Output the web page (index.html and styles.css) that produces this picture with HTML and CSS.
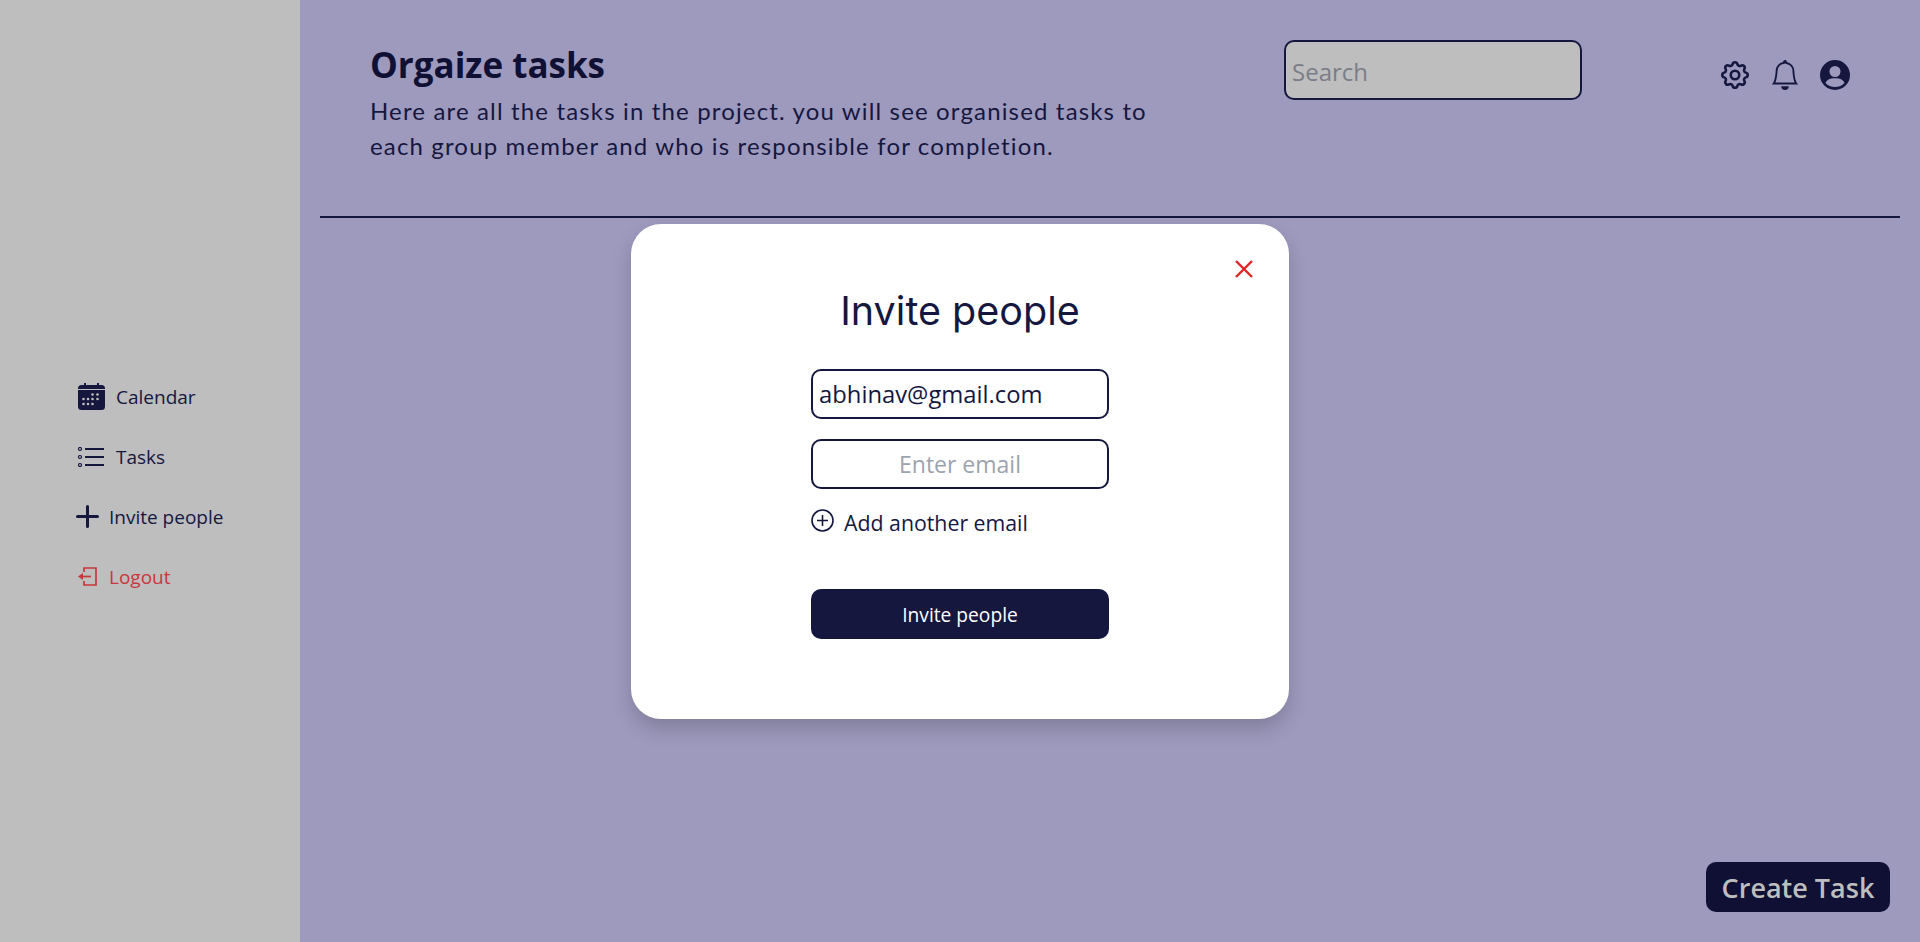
FILE: index.html
```html
<!DOCTYPE html>
<html lang="en">
<head>
  <meta charset="UTF-8" />
  <meta name="viewport" content="width=device-width, initial-scale=1.0"/>
  <title>Organize tasks</title>
  <link rel="stylesheet" href="styles.css">
</head>
<body>
  <aside class="sidebar">
    <nav class="side-nav">
      <a class="side-link">
        <svg class="icon-calendar" viewBox="0 0 27 27">
          <path class="dark-fill" d="M6 0h2v2h11V0h2v2h2.500A3.500 3.500 0 0 1 27 5.500V6H0V5.500A3.500 3.500 0 0 1 3.500 2H6z"/>
          <path class="dark-fill" d="M0 7h27V23.500A3.500 3.500 0 0 1 23.500 27h-20A3.500 3.500 0 0 1 0 23.500z"/>
          <g class="grey-fill">
            <circle cx="14.500" cy="11.500" r="1.300"/><circle cx="19.500" cy="11.500" r="1.300"/>
            <circle cx="5.500" cy="16" r="1.300"/><circle cx="10" cy="16" r="1.300"/><circle cx="14.500" cy="16" r="1.300"/><circle cx="19.500" cy="16" r="1.300"/>
            <circle cx="5.500" cy="21" r="1.300"/><circle cx="10" cy="21" r="1.300"/><circle cx="14.500" cy="21" r="1.300"/>
          </g>
        </svg>
        <span>Calendar</span>
      </a>
      <a class="side-link">
        <svg class="icon-tasks" viewBox="0 0 26 20" fill="none" stroke="#15173f">
          <circle cx="2" cy="2" r="1.500" stroke-width="1.200"/>
          <circle cx="2" cy="10" r="1.500" stroke-width="1.200"/>
          <circle cx="2" cy="18" r="1.500" stroke-width="1.200"/>
          <path d="M7 2h19M7 10h19M7 18h19" stroke-width="1.800"/>
        </svg>
        <span>Tasks</span>
      </a>
      <a class="side-link side-link-tight">
        <svg class="icon-plus" viewBox="0 0 23 23" fill="none" stroke="#15173f" stroke-width="3" stroke-linecap="round">
          <path d="M11.500 1.500v20M1.500 11.500h20"/>
        </svg>
        <span>Invite people</span>
      </a>
      <a class="side-link side-link-tight logout">
        <svg class="icon-logout" viewBox="0 0 19 19" fill="none" stroke="#c8383a" stroke-width="1.700">
          <path d="M6 5V1h12v17H6v-4"/>
          <path d="M13 9.500H3"/>
          <path class="red-fill" stroke="none" d="M0 9.500L5 6v7z"/>
        </svg>
        <span>Logout</span>
      </a>
    </nav>
  </aside>

  <main class="content">
    <header class="top">
      <div class="intro">
        <h1>Orgaize tasks</h1>
        <p>Here are all the tasks in the project. you will see organised tasks to each group member and who is responsible for completion.</p>
      </div>
      <input class="search" type="text" placeholder="Search" />
      <div class="top-icons">
        <svg class="icon-gear" viewBox="0 0 24 24" fill="none" stroke="#15173f" stroke-width="1.800">
          <path d="M10.325 4.317c.426-1.756 2.924-1.756 3.35 0a1.724 1.724 0 002.573 1.066c1.543-.94 3.31.826 2.37 2.37a1.724 1.724 0 001.065 2.572c1.756.426 1.756 2.924 0 3.35a1.724 1.724 0 00-1.066 2.573c.94 1.543-.826 3.31-2.37 2.37a1.724 1.724 0 00-2.572 1.065c-.426 1.756-2.924 1.756-3.35 0a1.724 1.724 0 00-2.573-1.066c-1.543.94-3.31-.826-2.37-2.37a1.724 1.724 0 00-1.065-2.572c-1.756-.426-1.756-2.924 0-3.35a1.724 1.724 0 001.066-2.573c-.94-1.543.826-3.31 2.37-2.37.996.608 2.296.07 2.572-1.065z"/>
          <circle cx="12" cy="12" r="3"/>
        </svg>
        <svg class="icon-bell" viewBox="0 0 16 16">
          <path class="dark-fill" d="M8 16a2 2 0 0 0 2-2H6a2 2 0 0 0 2 2zM8 1.918l-.797.161A4.002 4.002 0 0 0 4 6c0 .628-.134 2.197-.459 3.742-.16.767-.376 1.566-.663 2.258h10.244c-.287-.692-.502-1.49-.663-2.258C12.134 8.197 12 6.628 12 6a4.002 4.002 0 0 0-3.203-3.92L8 1.917zM14.22 12c.223.447.481.801.78 1H1c.299-.199.557-.553.78-1C2.68 10.2 3 6.88 3 6c0-2.42 1.72-4.44 4.005-4.901a1 1 0 1 1 1.990 0A5.002 5.002 0 0 1 13 6c0 .88.32 4.2 1.220 6z"/>
        </svg>
        <svg class="icon-user" viewBox="0 0 30 30">
          <circle class="dark-fill" cx="15" cy="15" r="15"/>
          <circle class="bg-fill" cx="15" cy="11.500" r="5.500"/>
          <path class="bg-fill" d="M5.500 23c1.500-3.500 4.500-4.800 9.500-4.800s8 1.300 9.500 4.800c-2.300 2.600-5.700 4-9.500 4s-7.200-1.400-9.500-4z"/>
        </svg>
      </div>
    </header>
    <hr class="divider" />
  </main>

  <button class="create-task">Create Task</button>

  <div class="modal">
    <svg class="modal-close" viewBox="0 0 18 18" fill="none" stroke="#e02424" stroke-width="2.400">
      <path d="M1 1l16 16M17 1L1 17"/>
    </svg>
    <h2>Invite people</h2>
    <input class="email" type="text" value="abhinav@gmail.com" />
    <input class="email email-empty" type="text" placeholder="Enter email" />
    <div class="add-email">
      <svg class="icon-add" viewBox="0 0 23 23" fill="none" stroke="#15173f" stroke-width="1.600">
        <circle cx="11.500" cy="11.500" r="10.500"/>
        <path d="M11.500 6v11M6 11.500h11"/>
      </svg>
      <span>Add another email</span>
    </div>
    <button class="invite-btn">Invite people</button>
  </div>
</body>
</html>
```

FILE: styles.css
```css
* { box-sizing: border-box; }
html, body { height: 100%; }
body {
  margin: 0;
  display: flex;
  overflow: hidden;
  background: #9e9abe;
  color: #15173f;
  font-family: 'Open Sans', sans-serif;
}
.dark-fill { fill: #15173f; }
.grey-fill { fill: #bebebe; }
.bg-fill { fill: #9e9abe; }
.red-fill { fill: #c8383a; }

/* sidebar */
.sidebar {
  width: 300px;
  flex-shrink: 0;
  background: #bebebe;
  padding: 383px 0 0 76px;
}
.side-nav { display: flex; flex-direction: column; gap: 33px; }
.side-link {
  display: flex;
  align-items: center;
  gap: 12px;
  height: 27px;
  padding-left: 2px;
  font-size: 19px;
  color: #15173f;
}
.side-link:first-child { gap: 11px; }
.side-link-tight { padding-left: 0; gap: 10px; }
.logout { color: #c8383a; padding-left: 2px; gap: 12px; }
.icon-calendar { width: 27px; height: 27px; }
.icon-tasks { width: 26px; height: 20px; }
.icon-plus { width: 23px; height: 23px; }
.icon-logout { width: 19px; height: 19px; }

/* main part */
.content { flex: 1; padding: 0 20px; }
.top {
  display: flex;
  align-items: flex-start;
  height: 216px;
  padding-left: 50px;
}
.intro { width: 800px; padding-top: 44px; margin-right: 114px; }
.intro h1 {
  margin: 0 0 7px;
  color: #0f1033;
  font-size: 35px;
  line-height: 42px;
  font-weight: 700;
}
.intro p {
  margin: 0;
  font-family: 'Lato', sans-serif;
  font-size: 24px;
  line-height: 35px;
  letter-spacing: 1.15px;
}
.search {
  width: 298px;
  height: 60px;
  margin-top: 40px;
  padding: 2px 6px 0;
  background: #bebebe;
  border: 2px solid #15173f;
  border-radius: 10px;
  font-family: 'Open Sans', sans-serif;
  font-size: 24px;
}
.search::placeholder { color: #7a7d88; opacity: 1; }
.top-icons {
  display: flex;
  align-items: center;
  gap: 20px;
  margin: 60px 0 0 138px;
}
.icon-gear { width: 34px; height: 34px; margin: -2px -2px; }
.icon-bell { width: 30px; height: 30px; }
.icon-user { width: 30px; height: 30px; }
.divider {
  margin: 0;
  border: 0;
  border-top: 2px solid #15173f;
}

/* floating button */
.create-task {
  position: absolute;
  right: 30px;
  bottom: 30px;
  width: 184px;
  height: 50px;
  padding: 0;
  background: #0f1033;
  color: #bebebe;
  border: 0;
  border-radius: 10px;
  font-family: 'Open Sans', sans-serif;
  font-size: 27px;
  font-weight: 600;
}

/* invite modal */
.modal {
  position: absolute;
  left: 631px;
  top: 224px;
  width: 658px;
  height: 495px;
  display: flex;
  flex-direction: column;
  align-items: center;
  padding-top: 57px;
  background: #fff;
  border-radius: 30px;
  box-shadow: 0 10px 20px rgba(0,0,0,0.18);
}
.modal-close {
  position: absolute;
  top: 36px;
  right: 36px;
  width: 18px;
  height: 18px;
}
.modal h2 {
  margin: 0 0 28px;
  font-family: 'Inter', sans-serif;
  font-size: 39.500px;
  line-height: 60px;
  font-weight: 400;
}
.email {
  width: 298px;
  height: 50px;
  margin-bottom: 20px;
  padding: 0 6px;
  background: #fff;
  border: 2px solid #15173f;
  border-radius: 10px;
  color: #15173f;
  font-family: 'Open Sans', sans-serif;
  font-size: 23.800px;
}
.email-empty { text-align: center; font-size: 23px; }
.email-empty::placeholder { color: #9ca3af; opacity: 1; }
.add-email {
  display: flex;
  align-items: center;
  gap: 10px;
  width: 298px;
  height: 26px;
  font-size: 21.300px;
}
.icon-add { width: 23px; height: 23px; margin-top: -4px; }
.invite-btn {
  width: 298px;
  height: 50px;
  margin-top: 54px;
  background: #15173f;
  color: #fff;
  border: 0;
  border-radius: 10px;
  font-family: 'Open Sans', sans-serif;
  font-size: 19.200px;
}
```
